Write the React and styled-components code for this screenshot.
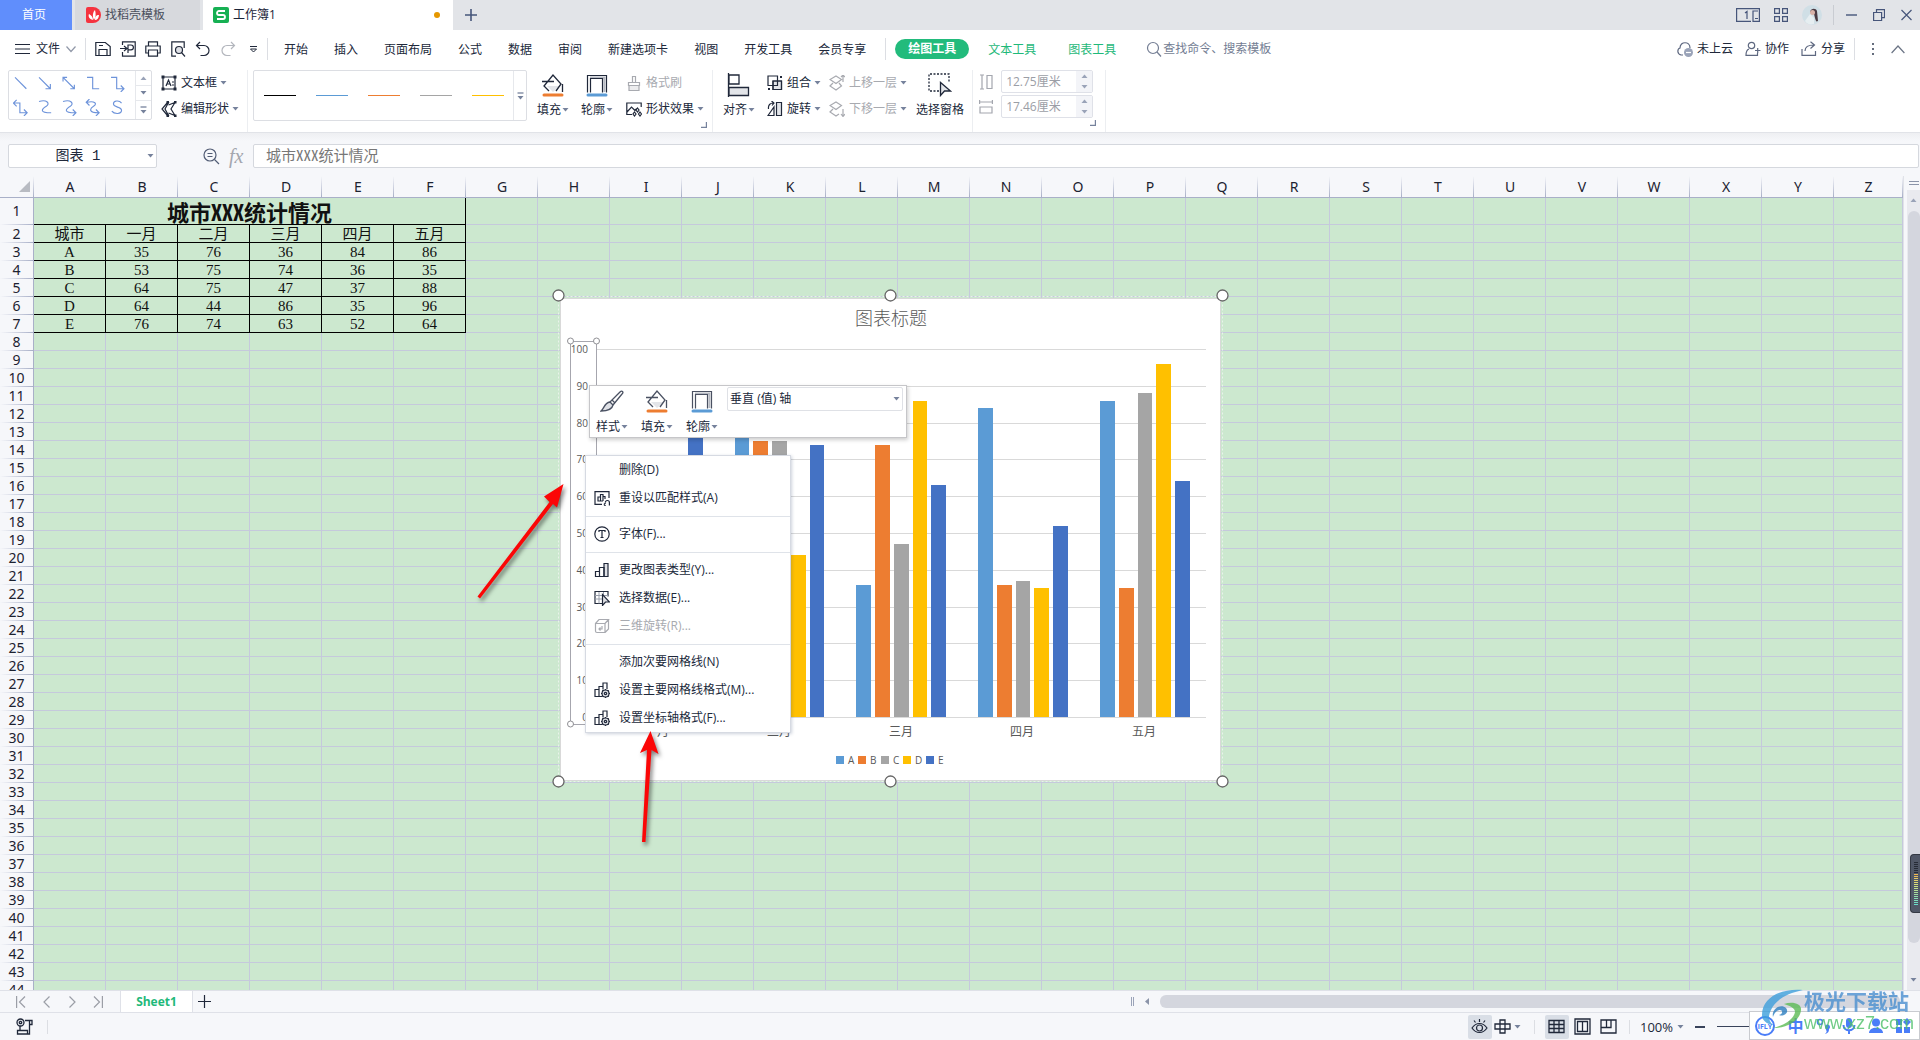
import React from "react";
import styled, { createGlobalStyle, css } from "styled-components";

const GlobalStyle = createGlobalStyle`
  * {
    box-sizing: border-box;
  }
  body {
    margin: 0;
    overflow: hidden;
    color: #20283a;
    font: 12px/16px "Open Sans", "Noto Sans CJK SC", sans-serif;
  }
  button, input, select {
    margin: 0;
    padding: 0;
    border: 0;
    background: none;
    color: inherit;
    font: inherit;
  }
  button {
    white-space: nowrap;
  }
  svg {
    display: block;
    flex: none;
  }
`;

const letters = "ABCDEFGHIJKLMNOPQRSTUVWXYZ".split("");
const months = ["一月", "二月", "三月", "四月", "五月"];
const cities = [
  { name: "A", color: "#5b9bd5", values: [35, 76, 36, 84, 86] },
  { name: "B", color: "#ed7d31", values: [53, 75, 74, 36, 35] },
  { name: "C", color: "#a5a5a5", values: [64, 75, 47, 37, 88] },
  { name: "D", color: "#ffc000", values: [64, 44, 86, 35, 96] },
  { name: "E", color: "#4472c4", values: [76, 74, 63, 52, 64] },
];
const menuTabs = [
  "开始",
  "插入",
  "页面布局",
  "公式",
  "数据",
  "审阅",
  "新建选项卡",
  "视图",
  "开发工具",
  "会员专享",
];

function Icon({ w = 16, h = 16, sw = 1.2, children }) {
  return (
    <svg
      width={w}
      height={h}
      viewBox={`0 0 ${w} ${h}`}
      fill="none"
      stroke="currentColor"
      strokeWidth={sw}
      aria-hidden="true"
    >
      {children}
    </svg>
  );
}

const Arrow = () => (
  <svg width="7" height="4" viewBox="0 0 7 4" aria-hidden="true">
    <path d="M.5 0h6l-3 3.500z" fill="#76829c" />
  </svg>
);

const ArrowUp = () => (
  <svg width="7" height="4" viewBox="0 0 7 4" aria-hidden="true">
    <path d="M.5 4h6l-3-3.500z" fill="#9aa3b8" />
  </svg>
);

const MoreArrow = () => (
  <Icon w={9} h={8} sw={1.3}>
    <path d="M1.500 1h6" />
    <path d="M1.500 4h6l-3 3.500z" fill="currentColor" stroke="none" />
  </Icon>
);

const Corner = () => (
  <CornerButton aria-label="更多设置">
    <Icon w={6} h={6} sw={1.2}>
      <path d="M5.400 0v5.400H0" />
    </Icon>
  </CornerButton>
);

const FillIcon = () => (
  <Icon w={24} h={24} sw={1.3}>
    <path d="M6 13h13l-7 6z" fill="#e3e5e9" stroke="none" />
    <path d="M8 18l-5-5L12 2l8 9-5 7M1 8.500h12M21.500 11v8" />
    <path d="M3 22h18" stroke="#ed7d31" strokeWidth="3" strokeLinecap="round" />
  </Icon>
);

const OutlineIcon = () => (
  <Icon w={24} h={24} sw={1.2}>
    <path d="M2.500 19.500V2.500h19v17" />
    <path d="M19.500 19V4.500H5" stroke="#b5b9c2" strokeWidth="2" />
    <path d="M5.500 19.500V5.500h12v14" />
    <path d="M3 22h18" stroke="#5b9bd5" strokeWidth="3" strokeLinecap="round" />
  </Icon>
);

const shapePaths = [
  "M3 3l14 14",
  "M3 3l14 14M17 11v6h-6",
  "M3 3l14 14M17 12v5h-5M3 8V3h5",
  "M3 3h7v14h8",
  "M3 3h7v14h8M15 13l4 4-4 4",
  "M2 5h7v12h8M14 13l4 4-4 4M5 1L1 5l4 4",
  "M3 3c10-3 14 3 9 6s-10 8 6 8",
  "M3 3c10-3 14 3 9 6s-10 8 6 8M15 13l4 4-4 4",
  "M3 4c10-2 13 2 8 5s-6 8 6 8M14 13l4 4-4 4M6 0L2 4l4 4",
  "M16 5c-3-4-10-3-10 1 0 5 10 3 10 8 0 5-9 5-12 1",
];

function TitleBar() {
  return (
    <TitleRow>
      <HomeTab>首页</HomeTab>
      <DocTab>
        <svg width="15" height="16" viewBox="0 0 15 16" aria-hidden="true">
          <path d="M0 2a2 2 0 0 1 2-2h5a8 8 0 0 1 0 16H2a2 2 0 0 1-2-2z" fill="#f5333f" />
          <path
            d="M8 13C6 9 7 5 9 3c1 4 1 7-1 10zm-1 0C3 12 2 9 3 7c2 1 4 3 4 6zm2 0c0-3 1-5 4-5 0 3-2 5-4 5z"
            fill="#fff"
          />
        </svg>
        找稻壳模板
      </DocTab>
      <DocTab $active>
        <svg width="16" height="16" viewBox="0 0 16 16" aria-hidden="true">
          <rect width="16" height="16" rx="2" fill="#16b053" />
          <path d="M12 4H6a2 2 0 0 0 0 4h4a2 2 0 0 1 0 4H4" fill="none" stroke="#fff" strokeWidth="1.8" />
        </svg>
        工作簿1
        <UnsavedDot />
      </DocTab>
      <NewTab aria-label="新建">
        <Icon w={12} h={12} sw={1.6}>
          <path d="M6 0v12M0 6h12" />
        </Icon>
      </NewTab>
      <WindowTools>
        <button aria-label="窗口">
          <Icon w={24} h={14}>
            <path d="M15 13.400H.6V.6h22.800v12.800H17V3h5M9 5l2-1.500V11M19 10.500h3" />
          </Icon>
        </button>
        <button aria-label="应用">
          <Icon w={14} h={14}>
            <path d="M.6.6h4.800v4.800H.6zM8.600.6h4.800v4.800H8.600zM.6 8.600h4.800v4.800H.6zM8.600 8.600h4.800v4.800H8.600z" />
          </Icon>
        </button>
        <Avatar aria-label="账户">
          <svg width="20" height="20" viewBox="0 0 20 20" aria-hidden="true">
            <circle cx="10" cy="10" r="10" fill="#d0dfe6" />
            <path d="M8 7c1-4 6-4 7-1l1 10c-2 1-2 0-3-3l-1-4z" fill="#4a3a42" />
            <circle cx="10.500" cy="7.500" r="2.500" fill="#d9b3a9" />
            <path d="M3 16l5-7 4 4v6c-4 1-7 0-9-3z" fill="#e6eef1" />
          </svg>
        </Avatar>
      </WindowTools>
      <WindowButtons>
        <button aria-label="最小化">
          <Icon w={11} h={12} sw={1.4}>
            <path d="M0 6h11" />
          </Icon>
        </button>
        <button aria-label="还原">
          <Icon w={12} h={12}>
            <path d="M.6 3.500h8v8h-8zM3.500 3.500V.6h8v8H8.600" />
          </Icon>
        </button>
        <button aria-label="关闭">
          <Icon w={11} h={12}>
            <path d="M.5 1l10 10M10.500 1l-10 10" />
          </Icon>
        </button>
      </WindowButtons>
    </TitleRow>
  );
}

function MenuBar() {
  return (
    <MenuRow>
      <FileButton>
        <Icon w={15} h={12}>
          <path d="M0 1.500h15M0 6h15M0 10.500h15" />
        </Icon>
        文件
        <Icon w={10} h={8}>
          <path d="M.5 1.500L5 6.500l4.500-5" stroke="#9198a8" />
        </Icon>
      </FileButton>
      <Divider />
      <QuickTools>
        <button aria-label="保存">
          <Icon>
            <path d="M.8 14.500V1.500h9.500l4.900 4v9zM4 14.500v-6h8v6M4 4.500h4" />
          </Icon>
        </button>
        <button aria-label="输出为PDF">
          <Icon>
            <path d="M2.500 4V.8h12.700v14.400H2.500V11M0 7.500h6M4 5l3 2.500L4 10M8 12V4h3a2.300 2.300 0 0 1 0 4.800H8" />
          </Icon>
        </button>
        <button aria-label="打印">
          <Icon>
            <path d="M3.500 4.500V.8h9v3.700M3.500 12H.8V5h14.400v7h-2.700M3.500 9h9v6.200h-9z" />
          </Icon>
        </button>
        <button aria-label="打印预览">
          <Icon>
            <path d="M6 15.200H1.800V.8h12.400V7" />
            <circle cx="9" cy="9" r="3.500" fill="#dfe1e6" />
            <path d="M11.500 11.500l3.500 4" />
          </Icon>
        </button>
        <button aria-label="撤销">
          <Icon>
            <path d="M5 1L1.500 4.500 5 8M2 4.500h7a5 5 0 0 1 0 10H5.500" />
          </Icon>
        </button>
        <button aria-label="恢复">
          <Icon>
            <path d="M11 1l3.500 3.500L11 8M14 4.500H7a5 5 0 0 0 0 10h3.500" stroke="#b3b6bd" />
          </Icon>
        </button>
      </QuickTools>
      <MoreTools aria-label="自定义快速访问">
        <Icon w={9} h={8} sw={1}>
          <path d="M1 1.500h7M1.500 4L4.500 7l3-3z" />
        </Icon>
      </MoreTools>
      <Divider />
      <TabList>
        {menuTabs.map((name) => (
          <MenuTab key={name}>{name}</MenuTab>
        ))}
      </TabList>
      <Divider />
      <ActivePill>绘图工具</ActivePill>
      <ContextTab>文本工具</ContextTab>
      <ContextTab>图表工具</ContextTab>
      <SearchButton>
        <Icon>
          <circle cx="7" cy="7" r="5.500" />
          <path d="M11 11l4 4.500" />
        </Icon>
        查找命令、搜索模板
      </SearchButton>
      <ShareTools>
        <ShareButton>
          <Icon>
            <path d="M6 14H4C0 13 0 8 3 7c0-7 10-7 10 0" />
            <circle cx="11.500" cy="11.500" r="4.500" fill="#9aa3b8" stroke="none" />
            <path d="M9 11.500h5" stroke="#fff" />
          </Icon>
          未上云
        </ShareButton>
        <ShareButton>
          <Icon>
            <circle cx="6.500" cy="4.500" r="3.200" />
            <path d="M4 8C1 9 1 12 1 14.400h11.500V12M10 9.500h5.500M12.700 7v5" />
          </Icon>
          协作
        </ShareButton>
        <ShareButton>
          <Icon>
            <path d="M1 8v6.400h13.500V10M4 10c0-4 3-6 9-6M9.500.8L13.500 4 9.500 7.500" />
          </Icon>
          分享
        </ShareButton>
        <ShareDivider />
        <MoreDots aria-label="更多">
          <svg width="4" height="14" viewBox="0 0 4 14" fill="#656d7d">
            <path d="M1 1h2v2H1zM1 6h2v2H1zM1 11h2v2H1z" />
          </svg>
        </MoreDots>
        <button aria-label="折叠功能区">
          <Icon w={14} h={9}>
            <path d="M.6 8L7 1l6.400 7" stroke="#6b7485" />
          </Icon>
        </button>
      </ShareTools>
    </MenuRow>
  );
}

function Ribbon() {
  return (
    <RibbonRow>
      <ShapeGallery>
        <ShapeGrid>
          {shapePaths.map((d, i) => (
            <ShapeButton key={i} aria-label={`线条 ${i + 1}`}>
              <svg width="17" height="17" viewBox="1 0 20 21" fill="none" stroke="#6d93da" strokeWidth="1.4">
                <path d={d} />
              </svg>
            </ShapeButton>
          ))}
        </ShapeGrid>
        <GalleryScroll>
          <button aria-label="上一行">
            <ArrowUp />
          </button>
          <button aria-label="下一行">
            <Arrow />
          </button>
          <button aria-label="展开">
            <MoreArrow />
          </button>
        </GalleryScroll>
      </ShapeGallery>
      <ToolColumn $left={9}>
        <ToolButton>
          <Icon>
            <path d="M2 2h12v12H2zM5 11l2.500-6L10 11M6 9h3M11 7h2M11 10h2" />
            <path d="M.5.5h3v3h-3zM12.500.5h3v3h-3zM.5 12.500h3v3h-3zM12.500 12.500h3v3h-3z" fill="currentColor" stroke="none" />
          </Icon>
          文本框
          <Arrow />
        </ToolButton>
        <ToolButton>
          <Icon>
            <path d="M6.500 1.500L1 8l5.500 6.500M6.500 1.500h1L4 8l3.500 6.500h-1M7.500 4l6.500-2.500L10 8l4 6.500L7.500 12" />
            <path d="M13 0h2.500v2.500H13zM5.500 0H8v2.500H5.500zM5.500 13.500H8V16H5.500zM13 13.500h2.500V16H13z" fill="currentColor" stroke="none" />
          </Icon>
          编辑形状
          <Arrow />
        </ToolButton>
      </ToolColumn>
      <GroupLine />
      <LineGallery>
        <LineList>
          {["#000000", "#5b9bd5", "#ed7d31", "#a5a5a5", "#ffc000"].map((color) => (
            <LineButton key={color} $color={color} aria-label={`线条样式 ${color}`} />
          ))}
        </LineList>
        <LineMore aria-label="更多线条样式">
          <MoreArrow />
        </LineMore>
      </LineGallery>
      <BigButton $left={10}>
        <FillIcon />
        <Caption>
          填充 <Arrow />
        </Caption>
      </BigButton>
      <BigButton $left={12}>
        <OutlineIcon />
        <Caption>
          轮廓 <Arrow />
        </Caption>
      </BigButton>
      <ToolColumn $left={13}>
        <ToolButton disabled>
          <Icon>
            <path d="M3 11h10v4H3z" fill="#ececee" stroke="none" />
            <path d="M6.500 7V1.500h3V7M2.500 7.500h11v3h-11zM3 10.500v5h10v-5" />
          </Icon>
          格式刷
        </ToolButton>
        <ToolButton>
          <Icon>
            <path d="M6 13.500H.8V2h14.400v4M1 11l4.500-5L9 9.500l1.500-2" />
            <path d="M11.500 7l1.500 2-1.500 2-1.500-2zM8.500 11l1.500 2-1.500 2L7 13zM14 11l1.500 2-1.500 2-1.500-2z" />
          </Icon>
          形状效果
          <Arrow />
        </ToolButton>
        <Corner />
      </ToolColumn>
      <GroupLine />
      <BigButton $left={10}>
        <Icon w={24} h={24} sw={1.3}>
          <path d="M1.500 0v24M2 2h10v9H2z" />
          <path d="M2 14.500h19.500v8H2z" fill="#e3e5e9" />
        </Icon>
        <Caption>
          对齐 <Arrow />
        </Caption>
      </BigButton>
      <ToolColumn $left={12}>
        <ToolButton>
          <Icon>
            <path d="M6 6h8.500v8.500H6z" fill="#e3e5e9" />
            <path d="M1 1h9.500v9.500H1zM6 6h8.500v8.500H6z" />
            <path d="M1 13h2v2H1zM13 1h2v2h-2z" fill="currentColor" stroke="none" />
          </Icon>
          组合
          <Arrow />
        </ToolButton>
        <ToolButton>
          <Icon>
            <path d="M9.500 1.500h5v13h-5z" fill="#e3e5e9" />
            <path d="M7 6v8.500H1zM1.500 8C1 4 3 2 6.500 2M4.500 0l2.500 2-2 2.500" />
          </Icon>
          旋转
          <Arrow />
        </ToolButton>
      </ToolColumn>
      <ToolColumn $left={8}>
        <ToolButton disabled>
          <Icon>
            <path d="M7 1l5.500 3.500L7 8.500 1 4.500zM4 8l-3 3 6 4 5.500-4L10 8M14 7V0M12 2l2-2 2 2" />
          </Icon>
          上移一层
          <Arrow />
        </ToolButton>
        <ToolButton disabled>
          <Icon>
            <path d="M7 1l5.500 3.500L7 8.500 1 4.500zM4 8l-3 3 6 4 3-2M14 8v7M12 13l2 2.500 2-2.500" />
          </Icon>
          下移一层
          <Arrow />
        </ToolButton>
      </ToolColumn>
      <BigButton $left={9}>
        <Icon w={24} h={24} sw={1.3}>
          <path d="M11 18H1V1h20v8" strokeDasharray="2 1.500" />
          <path d="M12.500 9.500v13l4-4.500h6z" fill="#e3e5e9" />
        </Icon>
        <Caption>选择窗格</Caption>
      </BigButton>
      <GroupLine />
      <SizeGroup>
        <SizeField>
          <Icon w={14} h={16}>
            <path d="M1 1h4M3 1v14M1 15h4M8 1.500h5v13H8z" />
          </Icon>
          <SizeBox>
            <input aria-label="高度" defaultValue="12.75厘米" disabled />
            <Spinner>
              <ArrowUp />
              <ArrowUp />
            </Spinner>
          </SizeBox>
        </SizeField>
        <SizeField>
          <Icon w={14} h={16}>
            <path d="M.6 1v4M.6 3h12.800M13.400 1v4M1 8h12v6H1z" />
          </Icon>
          <SizeBox>
            <input aria-label="宽度" defaultValue="17.46厘米" disabled />
            <Spinner>
              <ArrowUp />
              <ArrowUp />
            </Spinner>
          </SizeBox>
        </SizeField>
        <Corner />
      </SizeGroup>
      <GroupLine />
    </RibbonRow>
  );
}

function FormulaBar() {
  return (
    <FormulaRow>
      <NameBox>
        <input aria-label="名称框" defaultValue="图表 1" />
        <button aria-label="选择名称">
          <Arrow />
        </button>
      </NameBox>
      <FormulaTools>
        <button aria-label="缩小">
          <Icon w={17} h={17}>
            <circle cx="7" cy="7" r="6" />
            <path d="M11.500 11.500L16 16M4.500 5.500h5M4.500 8.500h5" />
          </Icon>
        </button>
        <FxButton>fx</FxButton>
      </FormulaTools>
      <FormulaInput aria-label="编辑栏" defaultValue="城市XXX统计情况" />
    </FormulaRow>
  );
}

function Grid() {
  const rows = Array.from({ length: 43 }, (_, i) => i + 2);
  const cellValue = (row, col) => {
    if (row === 2) return col === 0 ? "城市" : months[col - 1];
    const city = cities[row - 3];
    return col === 0 ? city.name : city.values[col - 1];
  };
  return (
    <Table>
      <colgroup>
        <RowHeadCol />
        {letters.map((l) => (
          <DataCol key={l} $last={l === "Z"} />
        ))}
      </colgroup>
      <thead>
        <tr>
          <SelectAll aria-label="全选">
            <svg width="11" height="11" viewBox="0 0 11 11">
              <path d="M11 0v11H0z" fill="#b8bbc2" />
            </svg>
          </SelectAll>
          {letters.map((l) => (
            <ColHead key={l} scope="col">
              {l}
            </ColHead>
          ))}
        </tr>
      </thead>
      <tbody>
        <tr>
          <RowHead scope="row" $tall>
            1
          </RowHead>
          <TitleCell colSpan={6}>城市XXX统计情况</TitleCell>
          {letters.slice(6).map((l) => (
            <Cell key={l} />
          ))}
        </tr>
        {rows.map((row) => (
          <tr key={row}>
            <RowHead scope="row">{row}</RowHead>
            {letters.map((l, col) =>
              row <= 7 && col < 6 ? (
                <Cell key={l} $boxed>
                  {cellValue(row, col)}
                </Cell>
              ) : (
                <Cell key={l} />
              )
            )}
          </tr>
        ))}
      </tbody>
    </Table>
  );
}

function Chart() {
  const base = 717;
  const step = 36.8;
  const barX = (group, i) => Math.floor(613.3 + group * 121.8 + i * 18.75);
  return (
    <ChartSvg viewBox="550 286 682 506" role="img" aria-label="图表标题">
      <rect x="558.500" y="296.500" width="664" height="485" fill="none" stroke="#e9f3ea" strokeDasharray="2 2" />
      <rect x="560.500" y="298.500" width="660" height="482" fill="#fff" stroke="#d9d9d9" />
      <text x="891" y="325" fontSize="18" fontWeight="300" textAnchor="middle">
        图表标题
      </text>
      {Array.from({ length: 11 }, (_, i) => (
        <g key={i}>
          <path d={`M597 ${Math.round(base - i * step) + 0.5}H1206`} stroke="#d9d9d9" />
          <text x="588" y={Math.round(base - i * step) + 4} fontSize="10" textAnchor="end">
            {i * 10}
          </text>
        </g>
      ))}
      {months.map((month, g) => (
        <g key={month}>
          {cities.map((city, i) => {
            const top = Math.round(base - (city.values[g] * step) / 10);
            return (
              <rect
                key={city.name}
                x={barX(g, i)}
                y={top}
                width={barX(g, i + 1) - barX(g, i) - 4}
                height={base - top}
                fill={city.color}
              />
            );
          })}
          <text x={Math.round(657 + g * 121.8)} y="736" fontSize="12" textAnchor="middle">
            {month}
          </text>
        </g>
      ))}
      {cities.map((city, i) => (
        <g key={city.name}>
          <rect x={836 + Math.round(i * 22.4)} y="756" width="8" height="8" fill={city.color} />
          <text x={848 + Math.round(i * 22.4)} y="764" fontSize="10">
            {city.name}
          </text>
        </g>
      ))}
      <rect x="570.500" y="341.500" width="26" height="383" fill="none" stroke="#a6a6ae" />
      {[
        [570, 341],
        [596, 341],
        [570, 724],
        [596, 724],
      ].map(([x, y]) => (
        <circle key={`${x}-${y}`} cx={x + 0.5} cy={y} r="3" fill="#fff" stroke="#8f8f94" />
      ))}
      {[558, 890, 1222].map((x) =>
        [296, 782].map((y) => (
          <circle key={`${x}-${y}`} cx={x + 0.5} cy={y - 0.5} r="5.500" fill="#fff" stroke="#666" strokeWidth="1.3" />
        ))
      )}
    </ChartSvg>
  );
}

function MiniToolbar() {
  return (
    <MiniBar>
      <MiniButton>
        <Icon w={24} h={24} sw={1.3}>
          <path d="M10 13L20 3c2-2 4 0 2 2L13 16" />
          <path d="M10 13l3 3c-1 5-6 6-12 6 3-2 3-8 9-9z" fill="#dfe1e6" />
          <path d="M12 11l3 3" />
        </Icon>
        <Caption>
          样式 <Arrow />
        </Caption>
      </MiniButton>
      <MiniButton>
        <FillIcon />
        <Caption>
          填充 <Arrow />
        </Caption>
      </MiniButton>
      <MiniButton>
        <OutlineIcon />
        <Caption>
          轮廓 <Arrow />
        </Caption>
      </MiniButton>
      <AxisPicker>
        <select aria-label="图表元素">
          <option>垂直 (值) 轴</option>
        </select>
        <Arrow />
      </AxisPicker>
    </MiniBar>
  );
}

const GearBars = () => (
  <Icon>
    <path d="M8 14.500H1v-7h4M5 14.500V4.500h4M9 7.500V1h4v6" />
    <circle cx="11.500" cy="11.500" r="3.500" fill="#dfe1e6" />
    <circle cx="11.500" cy="11.500" r="1.200" />
    <path d="M11.500 7v1M11.500 15v1M7 11.500h1M15 11.500h1M8.300 8.300l.7.700M14 14l.7.700M14.700 8.300l-.7.700M9 14l-.7.700" />
  </Icon>
);

function ContextMenu() {
  return (
    <Menu>
      <MenuItem>
        <IconSlot />
        删除(D)
      </MenuItem>
      <MenuItem>
        <IconSlot>
          <Icon>
            <path d="M8 14.400H1V1.600h14V8M4 11V7h2.500v4zM6.500 11V4.500H9V11M9 11V6.500h2V9M4 11h5M10 14.500l1.500-1.500M10 14.500l1.500 1.500M15.400 15.500v-3a2 2 0 0 0-4 0" />
          </Icon>
        </IconSlot>
        重设以匹配样式(A)
      </MenuItem>
      <MenuLine />
      <MenuItem>
        <IconSlot>
          <Icon>
            <circle cx="8" cy="8" r="7.200" />
            <path d="M5 6V4.500h6V6M8 4.500v7M6.500 11.500h3" />
          </Icon>
        </IconSlot>
        字体(F)...
      </MenuItem>
      <MenuLine />
      <MenuItem>
        <IconSlot>
          <Icon>
            <path d="M10 1.500h4v13h-4z" fill="#dfe1e6" />
            <path d="M1.500 9.500h4v5h-4zM5.500 5.500H10v9H5.500z" />
          </Icon>
        </IconSlot>
        更改图表类型(Y)...
      </MenuItem>
      <MenuItem>
        <IconSlot>
          <Icon>
            <path d="M8 13.500H1V1.500h13v5" />
            <path d="M1 5.500h13M1 9h7M5 2v11.500M9.500 2v5" stroke="#9aa0ad" strokeWidth="1" />
            <path d="M8.500 4.500v11l3-3.500h4z" fill="#dfe1e6" />
          </Icon>
        </IconSlot>
        选择数据(E)...
      </MenuItem>
      <MenuItem disabled>
        <IconSlot>
          <Icon>
            <path d="M1.500 5.500h9.500v9H3a1.500 1.500 0 0 1-1.500-1.500zM1.500 5.500L5 1.500h9.500L11 5.500M14.500 1.500V11L11 14.500M5 11h3V8M6.500 9.500L5 11l1.500 1.500" />
          </Icon>
        </IconSlot>
        三维旋转(R)...
      </MenuItem>
      <MenuLine />
      <MenuItem>
        <IconSlot />
        添加次要网格线(N)
      </MenuItem>
      <MenuItem>
        <IconSlot>
          <GearBars />
        </IconSlot>
        设置主要网格线格式(M)...
      </MenuItem>
      <MenuItem>
        <IconSlot>
          <GearBars />
        </IconSlot>
        设置坐标轴格式(F)...
      </MenuItem>
    </Menu>
  );
}

const Pointers = () => (
  <PointerSvg viewBox="470 470 210 390" fill="#fb0606" aria-hidden="true">
    <path d="M563.500 484L557 507.500l-4-3.500-73 94.500-2.500-2 72-94.500-5.500-5.500z" />
    <path d="M650.500 731l8 23-7-4-6 92h-3.500l5-92-7 3z" />
  </PointerSvg>
);

function SheetBar() {
  return (
    <SheetRow>
      <SheetNav>
        <button aria-label="第一个工作表">
          <Icon w={10} h={12}>
            <path d="M.6 0v12M9 .5L3.500 6 9 11.500" />
          </Icon>
        </button>
        <button aria-label="上一个工作表">
          <Icon w={10} h={12}>
            <path d="M7.500.5L2 6l5.500 5.500" />
          </Icon>
        </button>
        <button aria-label="下一个工作表">
          <Icon w={10} h={12}>
            <path d="M2.500.5L8 6l-5.500 5.500" />
          </Icon>
        </button>
        <button aria-label="最后一个工作表">
          <Icon w={10} h={12}>
            <path d="M9.400 0v12M1 .5L6.500 6 1 11.500" />
          </Icon>
        </button>
      </SheetNav>
      <SheetTab>Sheet1</SheetTab>
      <AddSheet aria-label="新建工作表">
        <Icon w={13} h={13}>
          <path d="M6.500 0v13M0 6.500h13" />
        </Icon>
      </AddSheet>
      <HScroll>
        <HGrip />
        <svg width="4" height="7" viewBox="0 0 4 7">
          <path d="M4 0v7L0 3.500z" fill="#8b94a9" />
        </svg>
        <HThumb />
      </HScroll>
    </SheetRow>
  );
}

function StatusBar() {
  return (
    <StatusRow>
      <MacroButton aria-label="宏">
        <Icon w={17} h={17} sw={1.3}>
          <circle cx="4.500" cy="4.500" r="3.500" fill="#dfe1e6" />
          <circle cx="4.500" cy="4.500" r="1.200" />
          <path d="M9 2.500h7v4h-2.500M13.500 3v13H1.500v-3.500h10V16M4 8v4.500" />
        </Icon>
      </MacroButton>
      <ShortDivider />
      <ViewTools>
        <ViewButton $active aria-label="护眼模式">
          <Icon w={17} h={17}>
            <path d="M1 10c4-6 11-6 15 0-4 6-11 6-15 0zM8.500 1v3M3 2.500l1.500 2M14 2.500l-1.500 2" />
            <circle cx="8.500" cy="10" r="3" />
          </Icon>
        </ViewButton>
        <ArrowTool>
          <Icon w={17} h={17} sw={1.3}>
            <path d="M6 2h5v4h5v5h-5v4H6v-4H1V6h5zM6 6h5v5H6z" />
          </Icon>
          <Arrow />
        </ArrowTool>
        <ShortDivider />
        <ViewButton $active aria-label="普通视图">
          <Icon w={17} h={17} sw={1.3}>
            <path d="M1 2.500h15v12H1zM1 6.500h15M1 10.500h15M6 2.500v12M11 2.500v12" />
          </Icon>
        </ViewButton>
        <ViewButton aria-label="页面布局视图">
          <Icon w={17} h={17} sw={1.3}>
            <path d="M1 1h15v15H1zM3.500 3.500h10v10h-10zM8.500 3.500v10" />
          </Icon>
        </ViewButton>
        <ViewButton aria-label="分页预览">
          <Icon w={17} h={17} sw={1.3}>
            <path d="M1 2h15v13H1zM1 9.500h10V2M6.500 2v7.500" />
          </Icon>
        </ViewButton>
        <ZoomDivider />
        <ZoomButton>
          100%
          <Arrow />
        </ZoomButton>
        <ZoomOut aria-label="缩小显示" />
        <ZoomTrack />
        <ImeBar>
          <svg width="20" height="20" viewBox="0 0 20 20" aria-hidden="true">
            <circle cx="10" cy="10" r="9" fill="#fff" stroke="#4a7df8" strokeWidth="2" />
            <text x="10" y="13" fontSize="7" fontWeight="700" textAnchor="middle" fill="#4a7df8">
              iFLY
            </text>
          </svg>
          <ImeText>中</ImeText>
          <svg width="14" height="16" viewBox="0 0 14 16" fill="#4a7df8" aria-hidden="true">
            <circle cx="4" cy="4" r="2.500" fill="none" stroke="#4a7df8" strokeWidth="1.6" />
            <path d="M9 9a2.500 2.500 0 1 1 4 2c0 3-1 4-4 5 1-1 2-2 1.500-3z" />
          </svg>
          <svg width="14" height="16" viewBox="0 0 14 16" aria-hidden="true">
            <rect x="4" width="6" height="10" rx="3" fill="#4a7df8" />
            <path d="M1.500 7c0 7 11 7 11 0M7 12v4" fill="none" stroke="#4a7df8" strokeWidth="2" />
          </svg>
          <svg width="14" height="16" viewBox="0 0 14 16" fill="#4a7df8" aria-hidden="true">
            <circle cx="7" cy="4.500" r="4" />
            <path d="M0 15c0-7 14-7 14 0z" />
          </svg>
          <svg width="16" height="16" viewBox="0 0 16 16" fill="#4a7df8" aria-hidden="true">
            <path d="M1 1h6v6H1zM1 9h6v6H1zM9 9h6v6H9zM12 0l4 4-4 4-4-4z" />
          </svg>
        </ImeBar>
      </ViewTools>
    </StatusRow>
  );
}

export default function App() {
  return (
    <Shell>
      <GlobalStyle />
      <TitleBar />
      <MenuBar />
      <Ribbon />
      <FormulaBar />
      <Workspace>
        <Canvas>
          <Grid />
          <Chart />
          <MiniToolbar />
          <ContextMenu />
          <Pointers />
        </Canvas>
        <VScroll>
          <SplitHandle />
          <VTrack>
            <ArrowUp />
            <VThumb />
            <Arrow />
          </VTrack>
        </VScroll>
        <Meter>
          <MeterBars />
        </Meter>
      </Workspace>
      <SheetBar />
      <StatusBar />
      <Watermark>
        <svg width="44" height="42" viewBox="0 0 44 42" aria-hidden="true">
          <path d="M2 26C2 8 22-1 43 1 24 5 12 13 9 27c0 4 1 6 4 9C6 35 2 31 2 26z" fill="#3d9fdc" />
          <path d="M24 15c9-3 18 0 17 6-1 10-12 18-28 18 12-3 21-9 22-16 0-4-5-6-11-8z" fill="#5cbb55" />
          <path d="M13 28c-2-8 8-14 13-9 4 5-3 9-7 7 4-1 4-5 1-5-4 0-6 4-7 7z" fill="#2e7fc0" />
        </svg>
        <WatermarkText>
          <strong>极光下载站</strong>
          <span>www.xz7.com</span>
        </WatermarkText>
      </Watermark>
    </Shell>
  );
}

const Shell = styled.div`
  position: relative;
  display: flex;
  flex-direction: column;
  height: 100vh;
  overflow: hidden;
  background: #f6f7fa;
`;

/* title bar */

const TitleRow = styled.header`
  display: flex;
  align-items: center;
  height: 30px;
  flex: none;
  padding-right: 8px;
  background: #e2e4e8;
  color: #46557a;
`;

const HomeTab = styled.button`
  width: 72px;
  height: 30px;
  margin-right: 3px;
  background: #608efc;
  color: #fff;
  padding-right: 4px;
`;

const DocTab = styled.button`
  display: flex;
  align-items: center;
  gap: 4px;
  width: 125px;
  height: 30px;
  margin-right: 3px;
  padding: 0 13px 0 11px;
  background: #d7d9dd;
  color: #4a4f5c;
  ${(p) =>
    p.$active &&
    css`
      width: 250px;
      margin-right: 0;
      padding-left: 10px;
      background: #fff;
      color: #1b2438;
    `}
`;

const UnsavedDot = styled.span`
  width: 6px;
  height: 6px;
  margin-left: auto;
  border-radius: 50%;
  background: #e59700;
`;

const NewTab = styled.button`
  margin-left: 12px;
`;

const WindowTools = styled.div`
  display: flex;
  align-items: center;
  gap: 14px;
  margin-left: auto;
  padding-right: 11px;
  border-right: 1px solid #c9ccd2;
`;

const Avatar = styled.button`
  width: 20px;
  height: 20px;
`;

const WindowButtons = styled.div`
  display: flex;
  align-items: center;
  gap: 16px;
  padding-left: 12px;
`;

/* menu row */

const MenuRow = styled.nav`
  display: flex;
  align-items: center;
  height: 38px;
  flex: none;
  padding: 0 15px;
  background: #fff;
`;

const FileButton = styled.button`
  display: flex;
  align-items: center;
  gap: 6px;
  margin-right: 9px;
`;

const Divider = styled.span`
  width: 1px;
  height: 22px;
  background: #dcdee3;
`;

const QuickTools = styled.div`
  display: flex;
  gap: 9px;
  margin-left: 9px;
`;

const MoreTools = styled.button`
  margin: 0 9px 0 13px;
`;

const TabList = styled.div`
  display: flex;
  margin: 0 6px 0 3px;
`;

const MenuTab = styled.button`
  height: 30px;
  padding: 2px 13px 0;
`;

const ActivePill = styled.button`
  height: 20px;
  margin: 0 3px 0 9px;
  padding: 0 13px;
  border-radius: 10px;
  background: #22bb7c;
  color: #fff;
  font-weight: 700;
`;

const ContextTab = styled.button`
  height: 30px;
  padding: 2px 16px 0;
  color: #1fb97a;
`;

const SearchButton = styled.button`
  display: flex;
  align-items: center;
  gap: 1px;
  margin-left: 14px;
  color: #737d93;
`;

const ShareTools = styled.div`
  display: flex;
  align-items: center;
  gap: 12px;
  margin-left: auto;
`;

const ShareButton = styled.button`
  display: flex;
  align-items: center;
  gap: 4px;
  svg {
    color: #5e6880;
  }
`;

const ShareDivider = styled(Divider)`
  margin-left: -3px;
`;

const MoreDots = styled.button`
  margin: 0 4px;
`;

/* ribbon */

const RibbonRow = styled.section`
  display: flex;
  align-items: flex-start;
  height: 64px;
  flex: none;
  padding: 2px 8px 0;
  background: #fff;
`;

const ShapeGallery = styled.div`
  display: flex;
  width: 144px;
  height: 50px;
  border: 1px solid #dcdee3;
  border-radius: 2px;
`;

const ShapeGrid = styled.div`
  display: grid;
  grid-template-columns: repeat(5, 24px);
  flex: 1;
`;

const ShapeButton = styled.button`
  display: grid;
  place-items: center;
`;

const GalleryScroll = styled.div`
  display: grid;
  width: 16px;
  border-left: 1px solid #e6e8ec;
  button {
    display: grid;
    place-items: center;
    color: #76829c;
  }
  button + button {
    border-top: 1px solid #e6e8ec;
  }
`;

const ToolColumn = styled.div`
  display: flex;
  flex-direction: column;
  align-items: flex-start;
  gap: 2px;
  margin-left: ${(p) => p.$left}px;
`;

const ToolButton = styled.button`
  display: flex;
  align-items: center;
  gap: 3px;
  height: 24px;
  padding-top: 1px;
  > svg:first-child {
    margin-right: 1px;
  }
  &:disabled {
    color: #a8aab0;
  }
`;

const CornerButton = styled.button`
  align-self: flex-end;
  margin-right: -3px;
  color: #76829c;
`;

const GroupLine = styled.span`
  width: 1px;
  height: 62px;
  margin-left: 8px;
  background: #eceef1;
`;

const LineGallery = styled.div`
  display: flex;
  width: 274px;
  height: 51px;
  margin-left: 5px;
  border: 1px solid #dcdee3;
  border-radius: 2px;
`;

const LineList = styled.div`
  display: flex;
  align-items: center;
  gap: 20px;
  flex: 1;
  padding-left: 10px;
`;

const LineButton = styled.button`
  width: 32px;
  height: 20px;
  background: linear-gradient(${(p) => p.$color}, ${(p) => p.$color}) center / 100% 1px no-repeat;
`;

const LineMore = styled.button`
  display: grid;
  place-items: center;
  width: 13px;
  border-left: 1px solid #e6e8ec;
  color: #76829c;
`;

const BigButton = styled.button`
  display: flex;
  flex-direction: column;
  align-items: center;
  gap: 5px;
  margin-left: ${(p) => p.$left}px;
  padding-top: 3px;
`;

const Caption = styled.span`
  display: flex;
  align-items: center;
  gap: 1px;
`;

const SizeGroup = styled.div`
  display: flex;
  flex-direction: column;
  gap: 2px;
  margin-left: 6px;
  padding-right: 4px;
`;

const SizeField = styled.div`
  display: flex;
  align-items: center;
  gap: 8px;
  color: #a3a6ae;
`;

const SizeBox = styled.div`
  display: flex;
  width: 92px;
  height: 23px;
  border: 1px solid #dfe1e8;
  border-radius: 2px;
  input {
    width: 74px;
    padding-left: 4px;
    color: #9b9ea6;
  }
`;

const Spinner = styled.span`
  display: flex;
  flex-direction: column;
  align-items: center;
  justify-content: space-around;
  flex: 1;
  background: #f3f4f8;
  svg:last-child {
    transform: rotate(180deg);
  }
`;

/* formula bar */

const FormulaRow = styled.section`
  display: flex;
  align-items: flex-start;
  height: 44px;
  flex: none;
  padding: 11px 1px 0 8px;
  border-top: 1px solid #e1e3e8;
  background: linear-gradient(#eeeff2, #f6f7fa 8px);
`;

const NameBox = styled.div`
  display: flex;
  width: 149px;
  height: 24px;
  border: 1px solid #d5d8de;
  border-radius: 2px;
  background: #fff;
  font: 14px/22px "Liberation Mono", "Noto Sans CJK SC", monospace;
  input {
    width: 138px;
    text-align: center;
  }
`;

const FormulaTools = styled.div`
  display: flex;
  align-items: center;
  gap: 9px;
  width: 50px;
  height: 24px;
  margin-left: 46px;
  color: #525d75;
`;

const FxButton = styled.button`
  color: #a3a6ae;
  font: italic 20px/20px "Liberation Serif", serif;
`;

const FormulaInput = styled.input`
  flex: 1;
  height: 24px;
  padding: 0 12px 3px;
  border: 1px solid #d5d8de;
  border-radius: 2px;
  background: #fff;
  color: #777;
  font: 300 15px/20px "Noto Sans Mono CJK SC", "Noto Sans CJK SC", monospace;
`;

/* sheet */

const Workspace = styled.main`
  position: relative;
  display: flex;
  flex: 1;
  min-height: 0;
`;

const Canvas = styled.div`
  position: relative;
  flex: 1;
  min-width: 0;
  overflow: hidden;
`;

const Table = styled.table`
  width: 100%;
  min-width: 1900px;
  table-layout: fixed;
  border-collapse: separate;
  border-spacing: 0;
  background: #cce8cf;
  th,
  td {
    padding: 0;
  }
`;

const RowHeadCol = styled.col`
  width: 34px;
`;

const DataCol = styled.col`
  width: ${(p) => (p.$last ? "auto" : "72px")};
`;

const headText = css`
  color: #1c2230;
  font: 14px/15px "Noto Sans", sans-serif;
`;

const ColHead = styled.th`
  ${headText}
  height: 22px;
  border-bottom: 1px solid #a9b0c8;
  background: linear-gradient(transparent, #a9b0c8) right / 1px 100% no-repeat #f6f7fa;
`;

const SelectAll = styled(ColHead)`
  svg {
    margin: 0 4px 0 auto;
  }
`;

const RowHead = styled.th`
  ${headText}
  height: ${(p) => (p.$tall ? 27 : 18)}px;
  border-right: 1px solid #a9b0c8;
  background: linear-gradient(to right, transparent, #a9b0c8) bottom / 100% 1px no-repeat #f6f7fa;
  ${Table} & {
    padding-bottom: 2px;
  }
`;

const Cell = styled.td`
  border: solid #c5c9dc;
  border-width: 0 1px 1px 0;
  color: #111;
  font: 15px/15px "Liberation Serif", "Noto Sans CJK SC", serif;
  text-align: center;
  ${Table} & {
    padding-top: 2px;
  }
  ${(p) => p.$boxed && "border-color: #000;"}
`;

const TitleCell = styled(Cell)`
  border-color: #000;
  font: 700 22px/24px "Noto Sans Mono CJK SC", "Noto Sans CJK SC", serif;
  ${Table} & {
    padding: 0;
  }
`;

const ChartSvg = styled.svg`
  position: absolute;
  left: 550px;
  top: 110px;
  width: 682px;
  height: 506px;
  text {
    fill: #595959;
  }
`;

const PointerSvg = styled.svg`
  position: absolute;
  left: 470px;
  top: 294px;
  width: 210px;
  height: 390px;
  pointer-events: none;
  filter: drop-shadow(2px 3px 2px rgba(0, 0, 0, 0.5));
`;

const MiniBar = styled.div`
  position: absolute;
  left: 589px;
  top: 209px;
  display: flex;
  align-items: flex-start;
  gap: 13px;
  width: 318px;
  height: 53px;
  padding: 1px 3px 0 6px;
  border: 1px solid #c6c6c9;
  background: #fff;
  box-shadow: 1px 2px 4px rgba(0, 0, 0, 0.2);
`;

const MiniButton = styled.button`
  display: flex;
  flex-direction: column;
  align-items: center;
  gap: 6px;
  padding-top: 2px;
  svg {
    color: #4a5162;
  }
`;

const AxisPicker = styled.div`
  display: flex;
  align-items: center;
  flex: 1;
  height: 24px;
  margin-left: -4px;
  padding: 0 2px;
  border: 1px solid #dfe1e6;
  border-radius: 2px;
  select {
    flex: 1;
    appearance: none;
  }
`;

const Menu = styled.div`
  position: absolute;
  left: 585px;
  top: 279px;
  width: 206px;
  border: 1px solid #d6dae2;
  background: #fff;
  box-shadow: 1px 1px 3px rgba(60, 80, 120, 0.25);
`;

const MenuItem = styled.button`
  display: flex;
  align-items: center;
  gap: 9px;
  width: 100%;
  height: 28px;
  padding-left: 8px;
  &:disabled {
    color: #a8aab0;
  }
`;

const IconSlot = styled.span`
  width: 16px;
`;

const MenuLine = styled.div`
  height: 1px;
  margin: 4px 0 3px;
  background: #dfe3e9;
`;

/* scroll bars */

const VScroll = styled.div`
  display: flex;
  flex-direction: column;
  width: 17px;
  padding-left: 3px;
  border-left: 1px solid #e0e2e8;
`;

const SplitHandle = styled.div`
  width: 10px;
  height: 4px;
  margin: 5px 2px;
  border: solid #8b94a9;
  border-width: 1px 0;
`;

const VTrack = styled.div`
  display: flex;
  flex-direction: column;
  align-items: center;
  gap: 9px;
  flex: 1;
  padding: 8px 0;
  background: #e9eaef;
`;

const VThumb = styled.div`
  width: 12px;
  flex: 1;
  margin-bottom: 26px;
  border-radius: 6px;
  background: #d4d6de;
`;

const Meter = styled.div`
  position: absolute;
  right: 0;
  top: 678px;
  width: 10px;
  height: 59px;
  padding: 7px 2px 6px 3px;
  border: 1px solid #343944;
  border-right: 0;
  border-radius: 4px 0 0 4px;
  background: #505767;
`;

const MeterBars = styled.div`
  height: 100%;
  background: repeating-linear-gradient(transparent 0 1px, #505767 1px 2px),
    linear-gradient(#262b36 26%, #f0b44e 27%, #d9e07a 50%, #5fdcd0);
`;

const SheetRow = styled.section`
  display: flex;
  align-items: center;
  height: 23px;
  flex: none;
  border: solid #dfe1e8;
  border-width: 1px 0;
`;

const SheetNav = styled.div`
  display: flex;
  justify-content: space-between;
  width: 87px;
  margin: 0 17px 0 16px;
  color: #9b9ea6;
`;

const SheetTab = styled.button`
  width: 73px;
  height: 21px;
  border: solid #dfe1e8;
  border-width: 0 1px;
  background: #fff;
  color: #1fb97a;
  font-weight: 700;
`;

const AddSheet = styled.button`
  margin-left: 5px;
`;

const HScroll = styled.div`
  display: flex;
  align-items: center;
  gap: 11px;
  width: 41%;
  margin: 0 2px 0 auto;
  padding-right: 18px;
`;

const HGrip = styled.span`
  width: 3px;
  height: 9px;
  border: solid #9aa3b8;
  border-width: 0 1px;
`;

const HThumb = styled.div`
  flex: 1;
  height: 13px;
  border-radius: 6px;
  background: #d4d6de;
`;

/* status bar */

const StatusRow = styled.footer`
  display: flex;
  align-items: center;
  height: 27px;
  flex: none;
`;

const MacroButton = styled.button`
  margin: 0 14px 0 16px;
`;

const ShortDivider = styled.span`
  width: 1px;
  height: 14px;
  background: #dcdee3;
`;

const ZoomDivider = styled(ShortDivider)`
  margin-left: 6px;
`;

const ViewTools = styled.div`
  display: flex;
  align-items: center;
  margin-left: auto;
`;

const ViewButton = styled.button`
  display: grid;
  place-items: center;
  width: 24px;
  height: 24px;
  margin-right: 2px;
  border-radius: 2px;
  background: ${(p) => (p.$active ? "#d9dee6" : "none")};
`;

const ArrowTool = styled.button`
  display: flex;
  align-items: center;
  gap: 3px;
  margin-right: 13px;
  & + span {
    margin-right: 10px;
  }
`;

const ZoomButton = styled.button`
  display: flex;
  align-items: center;
  gap: 4px;
  margin: 0 11px 0 10px;
  font-size: 13px;
`;

const ZoomOut = styled.button`
  width: 10px;
  height: 2px;
  margin-right: 12px;
  background: #39435b;
`;

const ZoomTrack = styled.span`
  width: 32px;
  height: 1px;
  background: #39435b;
`;

const ImeBar = styled.div`
  display: flex;
  align-items: center;
  justify-content: space-between;
  width: 171px;
  height: 29px;
  margin-top: -2px;
  padding: 0 8px 0 5px;
  border: 1px solid #c9cbd0;
  background: #fff;
`;

const ImeText = styled.span`
  color: #4a7df8;
  font-size: 16px;
  font-weight: 700;
`;

const Watermark = styled.div`
  position: absolute;
  right: 8px;
  bottom: 7px;
  display: flex;
  width: 152px;
  opacity: 0.8;
  pointer-events: none;
`;

const WatermarkText = styled.div`
  display: flex;
  flex-direction: column;
  strong {
    color: #4a8fd0;
    font-size: 21px;
    line-height: 24px;
    white-space: nowrap;
  }
  span {
    color: #4dc069;
    font: 18px/20px "Liberation Sans", sans-serif;
  }
`;
